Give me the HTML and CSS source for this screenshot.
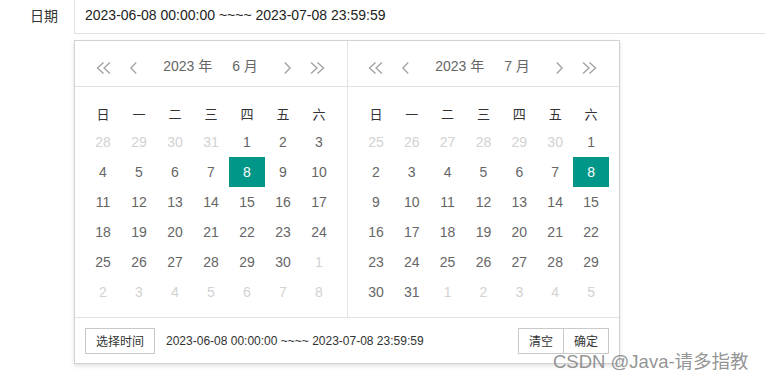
FILE: index.html
```html
<!DOCTYPE html>
<html lang="zh-CN">

<head>
  <meta charset="UTF-8" />
  <title>日期范围</title>
  <link rel="stylesheet" href="styles.css">
</head>

<body>

  <div class="form-row">
    <label class="form-label">日期</label>
    <input class="form-input" type="text" value="2023-06-08 00:00:00 ~~~~ 2023-07-08 23:59:59">
  </div>

  <div class="laydate">
    <div class="laydate-body">

      <!-- June -->
      <div class="laydate-main">
        <div class="laydate-header">
          <svg class="ico ico-dbl" viewBox="0 0 16 12"><path d="M7.5 0.5 L1.5 6 L7.5 11.5 M14 0.5 L8 6 L14 11.5" /></svg>
          <svg class="ico ico-one prev-m" viewBox="0 0 7 12"><path d="M6.2 0.5 L0.9 6 L6.2 11.5" /></svg>
          <div class="title"><span>2023 年</span><span>6 月</span></div>
          <svg class="ico ico-one next-m" viewBox="0 0 7 12"><path d="M0.8 0.5 L6.1 6 L0.8 11.5" /></svg>
          <svg class="ico ico-dbl next-y" viewBox="0 0 16 12"><path d="M2 0.5 L8 6 L2 11.5 M8.5 0.5 L14.5 6 L8.5 11.5" /></svg>
        </div>
        <div class="laydate-content">
          <table>
            <thead>
              <tr><th>日</th><th>一</th><th>二</th><th>三</th><th>四</th><th>五</th><th>六</th></tr>
            </thead>
            <tbody>
              <tr><td class="other">28</td><td class="other">29</td><td class="other">30</td><td class="other">31</td><td>1</td><td>2</td><td>3</td></tr>
              <tr><td>4</td><td>5</td><td>6</td><td>7</td><td class="sel">8</td><td>9</td><td>10</td></tr>
              <tr><td>11</td><td>12</td><td>13</td><td>14</td><td>15</td><td>16</td><td>17</td></tr>
              <tr><td>18</td><td>19</td><td>20</td><td>21</td><td>22</td><td>23</td><td>24</td></tr>
              <tr><td>25</td><td>26</td><td>27</td><td>28</td><td>29</td><td>30</td><td class="other">1</td></tr>
              <tr><td class="other">2</td><td class="other">3</td><td class="other">4</td><td class="other">5</td><td class="other">6</td><td class="other">7</td><td class="other">8</td></tr>
            </tbody>
          </table>
        </div>
      </div>

      <!-- July -->
      <div class="laydate-main second">
        <div class="laydate-header">
          <svg class="ico ico-dbl" viewBox="0 0 16 12"><path d="M7.5 0.5 L1.5 6 L7.5 11.5 M14 0.5 L8 6 L14 11.5" /></svg>
          <svg class="ico ico-one prev-m" viewBox="0 0 7 12"><path d="M6.2 0.5 L0.9 6 L6.2 11.5" /></svg>
          <div class="title"><span>2023 年</span><span>7 月</span></div>
          <svg class="ico ico-one next-m" viewBox="0 0 7 12"><path d="M0.8 0.5 L6.1 6 L0.8 11.5" /></svg>
          <svg class="ico ico-dbl next-y" viewBox="0 0 16 12"><path d="M2 0.5 L8 6 L2 11.5 M8.5 0.5 L14.5 6 L8.5 11.5" /></svg>
        </div>
        <div class="laydate-content">
          <table>
            <thead>
              <tr><th>日</th><th>一</th><th>二</th><th>三</th><th>四</th><th>五</th><th>六</th></tr>
            </thead>
            <tbody>
              <tr><td class="other">25</td><td class="other">26</td><td class="other">27</td><td class="other">28</td><td class="other">29</td><td class="other">30</td><td>1</td></tr>
              <tr><td>2</td><td>3</td><td>4</td><td>5</td><td>6</td><td>7</td><td class="sel">8</td></tr>
              <tr><td>9</td><td>10</td><td>11</td><td>12</td><td>13</td><td>14</td><td>15</td></tr>
              <tr><td>16</td><td>17</td><td>18</td><td>19</td><td>20</td><td>21</td><td>22</td></tr>
              <tr><td>23</td><td>24</td><td>25</td><td>26</td><td>27</td><td>28</td><td>29</td></tr>
              <tr><td>30</td><td>31</td><td class="other">1</td><td class="other">2</td><td class="other">3</td><td class="other">4</td><td class="other">5</td></tr>
            </tbody>
          </table>
        </div>
      </div>
    </div>

    <div class="laydate-footer">
      <span class="btn-time">选择时间</span>
      <span class="range-text">2023-06-08 00:00:00 ~~~~ 2023-07-08 23:59:59</span>
      <div class="footer-btns">
        <span class="btn">清空</span>
        <span class="btn">确定</span>
      </div>
    </div>
  </div>

  <div class="watermark">CSDN @Java-请多指教</div>

</body>

</html>
```

FILE: styles.css
```css
html,
body {
  overflow: hidden;
}

body {
  margin: 0;
  font-family: 'Liberation Sans', 'Noto Sans CJK SC', sans-serif;
  font-size: 14px;
  color: #333;
  background: #fff;
  position: relative;
  height: 378px;
}

.form-row {
  display: flex;
  align-items: center;
  margin-top: -4px;
}

.form-label {
  width: 58px;
  padding-right: 16px;
  text-align: right;
  color: #333;
  font-size: 14px;
}

.form-input {
  flex: 1;
  height: 38px;
  box-sizing: border-box;
  margin-right: -2px;
  padding: 0 10px;
  border: 1px solid #e2e2e2;
  font-family: inherit;
  font-size: 14px;
  color: #222;
  outline: none;
}

.laydate {
  width: 544px;
  margin: 6px 0 0 74px;
  border: 1px solid #d2d2d2;
  box-shadow: 0 2px 4px rgba(0, 0, 0, 0.12);
  background: #fff;
}

.laydate-body {
  display: flex;
}

.laydate-main {
  width: 272px;
  box-sizing: border-box;
}

.laydate-main.second .laydate-header,
.laydate-main.second .laydate-content {
  border-left: 1px solid #e2e2e2;
}

.laydate-header {
  display: flex;
  align-items: center;
  height: 46px;
  box-sizing: border-box;
  padding: 10px 22px 5px 21px;
  line-height: 30px;
  border-bottom: 1px solid #e2e2e2;
}

.laydate-main.second .laydate-header {
  padding-left: 20px;
}

.ico {
  fill: none;
  stroke: #a3a3a3;
  stroke-width: 1.4;
  margin-top: 4px;
}

.ico-dbl {
  width: 16px;
  height: 12px;
}

.ico-one {
  width: 7px;
  height: 12px;
}

.prev-m {
  margin-left: 18px;
}

.next-y {
  margin-left: 18px;
}

.title {
  flex: 1;
  display: flex;
  justify-content: center;
  gap: 20px;
  color: #666;
}

.laydate-content {
  padding: 10px;
}

.laydate-content table {
  border-collapse: collapse;
  border-spacing: 0;
}

.laydate-content th,
.laydate-content td {
  width: 36px;
  height: 30px;
  padding: 0;
  text-align: center;
}

.laydate-content th {
  font-weight: 400;
  color: #333;
  padding-top: 3px;
  height: 27px;
  font-family: 'Noto Sans CJK SC', sans-serif;
  font-size: 13px;
}

.laydate-content td {
  color: #666;
}

.laydate-content td.other {
  color: #d2d2d2;
}

.laydate-content td.sel {
  background-color: #009688;
  color: #fff;
}

.laydate-footer {
  display: flex;
  align-items: center;
  padding: 10px 10px 9px;
  border-top: 1px solid #e2e2e2;
  font-size: 12px;
}

.btn-time,
.btn {
  height: 24px;
  line-height: 24px;
  padding: 0 10px;
  border: 1px solid #c9c9c9;
  color: #333;
  font-family: 'Noto Sans CJK SC', sans-serif;
  font-size: 12px;
  background: #fff;
}

.range-text {
  margin-left: 11px;
  color: #333;
}

.footer-btns {
  margin-left: auto;
  display: flex;
}

.footer-btns .btn + .btn {
  margin-left: -1px;
}

.watermark {
  position: absolute;
  left: 553px;
  top: 347px;
  font-size: 18.5px;
  color: rgba(120, 120, 120, 0.8);
  white-space: nowrap;
  font-family: 'Liberation Sans', 'Noto Sans CJK SC', sans-serif;
}
```
